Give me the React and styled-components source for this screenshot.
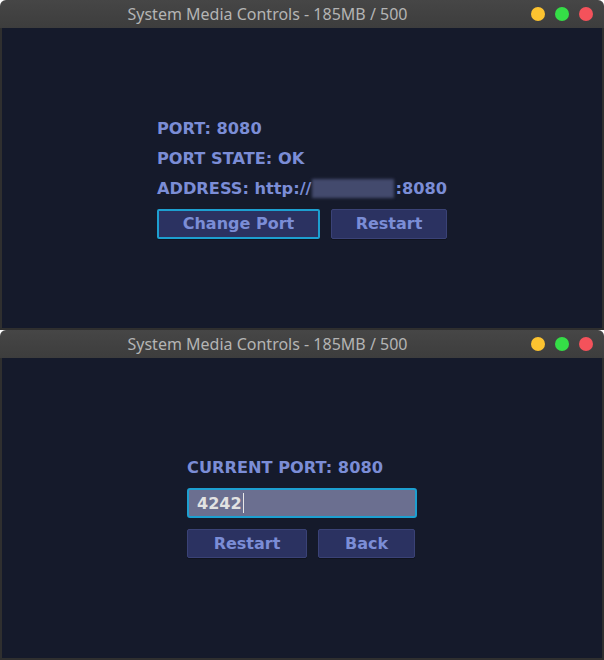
import React from 'react';
import styled, { createGlobalStyle } from 'styled-components';

const GlobalStyle = createGlobalStyle`
  html, body {
    margin: 0;
    padding: 0;
    background: #ffffff;
  }
  body {
    font-family: "DejaVu Sans", "Liberation Sans", sans-serif;
  }
`;

const Screen = styled.div`
  width: 604px;
  height: 660px;
  display: flex;
  flex-direction: column;
`;

const Window = styled.div`
  height: 330px;
  display: flex;
  flex-direction: column;
`;

const TitleBar = styled.div`
  height: 28px;
  flex-shrink: 0;
  display: flex;
  align-items: center;
  background: linear-gradient(#464646, #3d3d3d);
  border-radius: 6px 6px 0 0;
  padding-right: 11px;
`;

const Title = styled.div`
  flex: 1;
  text-align: center;
  color: #b4b4b4;
  font-family: "Noto Sans", "DejaVu Sans", sans-serif;
  font-size: 16px;
  padding-left: 4px;
`;

const Dots = styled.div`
  display: flex;
  gap: 10px;
`;

const Dot = styled.span`
  width: 14px;
  height: 14px;
  border-radius: 50%;
  background: ${(p) => p.color};
`;

const Body = styled.div`
  flex: 1;
  background: #151a2b;
  border: 2px solid #2f2f2f;
  border-top: none;
  display: flex;
  align-items: center;
  justify-content: center;
`;

const Panel = styled.div`
  display: flex;
  flex-direction: column;
  align-items: flex-start;
  margin-bottom: ${(p) => p.$lift}px;
`;

const Label = styled.div`
  color: #7b8dd6;
  font-weight: bold;
  font-size: 16.2px;
  line-height: 30px;
  display: flex;
  align-items: center;
`;

const Blur = styled.span`
  display: inline-block;
  width: 82px;
  height: 19px;
  background: #434a6d;
  filter: blur(1.5px);
  margin: 0 1px;
`;

const ButtonRow = styled.div`
  display: flex;
  gap: 11px;
  margin-top: ${(p) => p.$mt}px;
`;

const Button = styled.button`
  width: ${(p) => p.$w}px;
  height: ${(p) => p.$h}px;
  box-sizing: border-box;
  background: #2b3261;
  border: ${(p) => (p.$focus ? '2px solid #1d9fd0' : '1px solid #3a4276')};
  border-radius: 2px;
  color: #7b8dd6;
  font-family: "DejaVu Sans", sans-serif;
  font-weight: bold;
  font-size: 16px;
  padding: 0;
  box-shadow: 0 1px 0 #10131f;
`;

const Field = styled.div`
  width: 230px;
  height: 30px;
  box-sizing: border-box;
  margin-top: 5px;
  background: #6b6f90;
  border: 2px solid #1d9fd0;
  border-radius: 3px;
  padding-left: 8px;
  display: flex;
  align-items: center;
  color: #e2e2e2;
  font-weight: bold;
  font-size: 16px;
`;

const Caret = styled.span`
  width: 1px;
  height: 20px;
  background: #e8e8e8;
  margin-left: 1px;
`;

function WindowFrame({ children }) {
  return (
    <Window>
      <TitleBar>
        <Title>System Media Controls - 185MB / 500</Title>
        <Dots>
          <Dot color="#fcc330" />
          <Dot color="#35dd47" />
          <Dot color="#f4525b" />
        </Dots>
      </TitleBar>
      <Body>{children}</Body>
    </Window>
  );
}

export default function App() {
  return (
    <Screen>
      <GlobalStyle />
      <WindowFrame>
        <Panel $lift={4}>
          <Label>PORT: 8080</Label>
          <Label>PORT STATE: OK</Label>
          <Label>
            ADDRESS: http://<Blur />:8080
          </Label>
          <ButtonRow $mt={5}>
            <Button $w={163} $h={30} $focus>Change Port</Button>
            <Button $w={116} $h={30}>Restart</Button>
          </ButtonRow>
        </Panel>
      </WindowFrame>
      <WindowFrame>
        <Panel $lift={5}>
          <Label>CURRENT PORT: 8080</Label>
          <Field>
            4242
            <Caret />
          </Field>
          <ButtonRow $mt={11}>
            <Button $w={120} $h={29}>Restart</Button>
            <Button $w={97} $h={29}>Back</Button>
          </ButtonRow>
        </Panel>
      </WindowFrame>
    </Screen>
  );
}
